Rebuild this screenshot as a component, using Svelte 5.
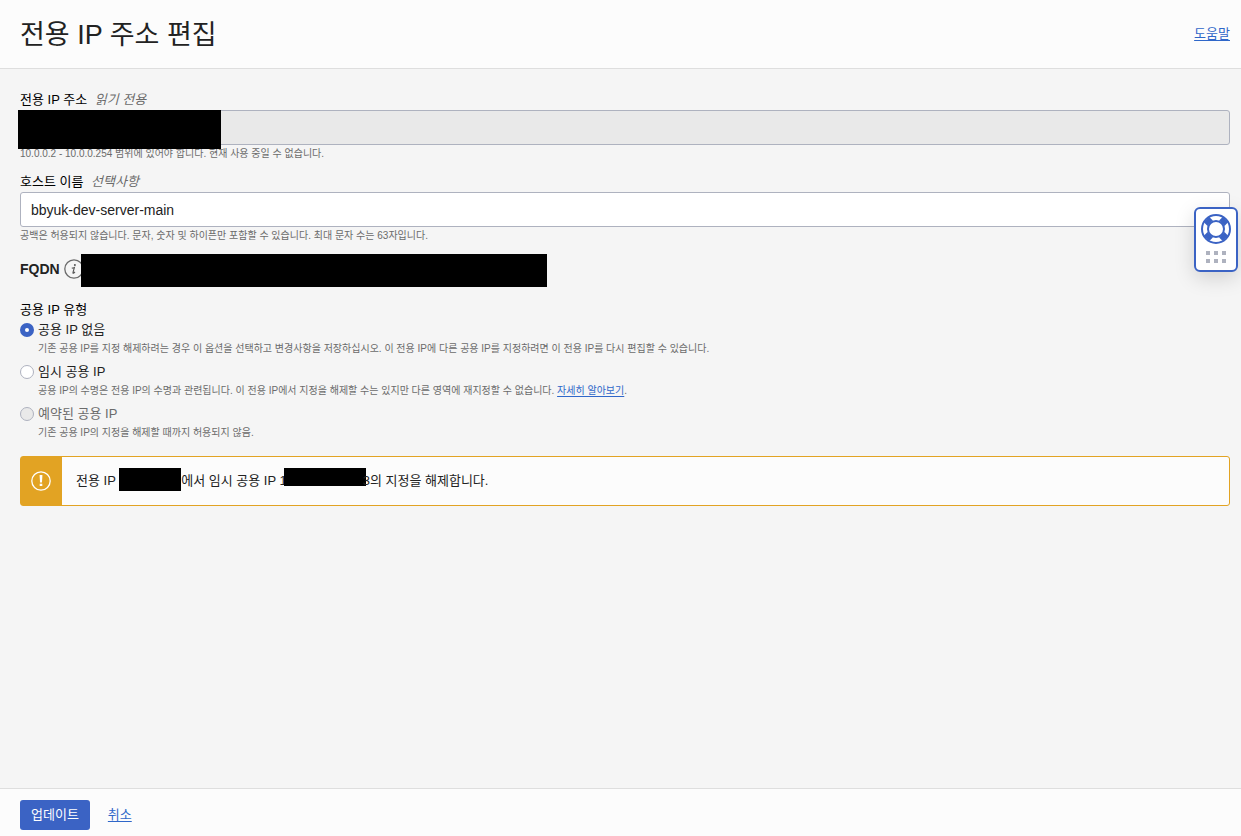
<script>
  let hostname = "bbyuk-dev-server-main";
  let ipType = "none";

  const options = [
    {
      value: "none",
      label: "공용 IP 없음",
      help: "기존 공용 IP를 지정 해제하려는 경우 이 옵션을 선택하고 변경사항을 저장하십시오. 이 전용 IP에 다른 공용 IP를 지정하려면 이 전용 IP를 다시 편집할 수 있습니다.",
    },
    {
      value: "ephemeral",
      label: "임시 공용 IP",
      help: "공용 IP의 수명은 전용 IP의 수명과 관련됩니다. 이 전용 IP에서 지정을 해제할 수는 있지만 다른 영역에 재지정할 수 없습니다.",
      link: "자세히 알아보기",
    },
    {
      value: "reserved",
      label: "예약된 공용 IP",
      help: "기존 공용 IP의 지정을 해제할 때까지 허용되지 않음.",
      disabled: true,
    },
  ];

  const dots = [0, 1, 2, 3, 4, 5];
</script>

<div class="panel">
  <header>
    <h1>전용 IP 주소 편집</h1>
    <a href="#help">도움말</a>
  </header>

  <main>
    <div class="field">
      <label for="private-ip">전용 IP 주소 <em>읽기 전용</em></label>
      <div class="control">
        <input id="private-ip" type="text" readonly />
        <span class="mask mask-ip"></span>
      </div>
      <p class="help">10.0.0.2 - 10.0.0.254 범위에 있어야 합니다. 현재 사용 중일 수 없습니다.</p>
    </div>

    <div class="field">
      <label for="hostname">호스트 이름 <em>선택사항</em></label>
      <input id="hostname" type="text" bind:value={hostname} />
      <p class="help">공백은 허용되지 않습니다. 문자, 숫자 및 하이픈만 포함할 수 있습니다. 최대 문자 수는 63자입니다.</p>
    </div>

    <div class="fqdn">
      <strong>FQDN</strong>
      <button class="info" aria-label="FQDN 정보">
        <svg width="20" height="20" viewBox="0 0 20 20">
          <circle cx="10" cy="10" r="9.2" fill="none" stroke="#6b6b6b" stroke-width="1.3" />
          <circle cx="10.9" cy="5.9" r="1" fill="#555" />
          <path d="M7.8 9.1c.8-.1 1.7-.3 2.6-.7L9 13.5c-.2.9.3 1 .8.5l1.2-1.2" fill="none" stroke="#555" stroke-width="1.1" />
        </svg>
      </button>
      <span class="mask mask-fqdn"></span>
    </div>

    <fieldset>
      <legend>공용 IP 유형</legend>
      {#each options as option}
        <div class="option">
          <label class="choice" class:disabled={option.disabled}>
            <input type="radio" name="ip-type" value={option.value} disabled={option.disabled} bind:group={ipType} />
            {option.label}
          </label>
          <p class="help">
            {option.help}
            {#if option.link}<a href="#learn-more">{option.link}</a>.{/if}
          </p>
        </div>
      {/each}
    </fieldset>

    <div class="alert" role="alert">
      <div class="alert-icon">
        <svg width="20" height="20" viewBox="0 0 20 20">
          <circle cx="10" cy="10" r="9.2" fill="none" stroke="#fff" stroke-width="1.3" />
          <path d="M8.6 4h2.8l-.4 7.6H9z" fill="#fff" />
          <rect x="8.7" y="12.7" width="2.6" height="2.3" fill="#fff" />
        </svg>
      </div>
      <p>전용 IP <span class="redacted wide-short"></span>에서 임시 공용 IP 1<span class="redacted wide-long"></span>3의 지정을 해제합니다.</p>
    </div>
  </main>

  <footer>
    <button class="submit">업데이트</button>
    <a href="#cancel">취소</a>
  </footer>
</div>

<button class="support" aria-label="지원">
  <svg width="30" height="30" viewBox="0 0 30 30" fill="none" stroke="#3b63c4">
    <circle cx="15" cy="15" r="14" stroke-width="2" />
    <circle cx="15" cy="15" r="8" stroke-width="2" />
    <path d="M5.6 5.6l3.6 3.6M24.4 5.6l-3.6 3.6M5.6 24.4l3.6-3.6M24.4 24.4l-3.6-3.6" stroke-width="7.6" />
  </svg>
  <span class="dots">
    {#each dots as dot}<i></i>{/each}
  </span>
</button>

<style>
  :global(body) {
    background: #f5f5f5;
    color: #222;
    font: 14px/20px "Liberation Sans", "Noto Sans CJK KR", sans-serif;
  }

  .panel {
    display: flex;
    flex-direction: column;
    min-height: 100vh;
    font-size: 13px;
  }

  header {
    display: flex;
    align-items: center;
    justify-content: space-between;
    height: 68px;
    padding: 0 11px 0 20px;
    background: #fcfcfc;
    border-bottom: 1px solid #dedede;
  }

  h1 {
    margin: 0;
    padding-top: 2px;
    font-size: 27px;
    line-height: 36px;
    font-weight: 400;
  }

  a {
    color: #2f67c9;
    text-underline-offset: 2px;
  }

  main {
    flex: 1;
    padding: 21px 11px 20px 20px;
  }

  p {
    margin: 0;
  }

  .field {
    margin-bottom: 9px;
  }

  .field label,
  legend {
    display: block;
    padding: 0;
    color: #000;
  }

  em {
    margin-left: 4px;
    color: #6b6b6b;
  }

  .control {
    position: relative;
  }

  input[type="text"] {
    display: block;
    box-sizing: border-box;
    width: 100%;
    height: 35px;
    padding: 0 10px;
    border: 1px solid #aeb2bf;
    border-radius: 3px;
    background: #fff;
    color: #222;
    font: inherit;
    font-size: 14px;
  }

  input[readonly] {
    background: #e9e9e9;
  }

  .mask {
    background: #000;
  }

  .mask-ip {
    position: absolute;
    left: -2px;
    top: 0;
    width: 203px;
    height: 39px;
  }

  .help {
    font-size: 10px;
    line-height: 18px;
    color: #6b6b6b;
  }

  .fqdn {
    position: relative;
    display: flex;
    align-items: center;
    gap: 4px;
    height: 30px;
    margin-bottom: 16px;
  }

  .fqdn strong {
    font-size: 14px;
  }

  .info {
    display: flex;
    padding: 0;
    border: 0;
    background: none;
  }

  .mask-fqdn {
    position: absolute;
    left: 61px;
    top: 0;
    width: 466px;
    height: 33px;
  }

  fieldset {
    margin: 0 0 14px;
    padding: 0;
    border: 0;
  }

  .option + .option {
    margin-top: 4px;
  }

  .choice {
    display: flex;
    align-items: center;
    gap: 4px;
  }

  .choice.disabled {
    color: #6b6b6b;
  }

  input[type="radio"] {
    appearance: none;
    box-sizing: border-box;
    width: 14px;
    height: 14px;
    margin: 0;
    border: 1px solid #aeb2bf;
    border-radius: 50%;
    background: #fff;
  }

  input[type="radio"]:checked {
    border: 5px solid #3b63c4;
  }

  input[type="radio"]:disabled {
    background: #e9e9e9;
  }

  .option .help {
    padding-left: 18px;
  }

  .alert {
    display: flex;
    box-sizing: border-box;
    height: 50px;
    border: 1px solid #e2a323;
    border-radius: 3px;
    background: #fcfcfc;
  }

  .alert-icon {
    display: flex;
    align-items: center;
    justify-content: center;
    width: 40px;
    padding-right: 1px;
    background: #e2a323;
  }

  .alert p {
    align-self: center;
    padding-left: 14px;
  }

  .redacted {
    display: inline-block;
    vertical-align: top;
    background: #000;
  }

  .wide-short {
    width: 62px;
    height: 23px;
    margin: -3px 0 0;
  }

  .wide-long {
    width: 82px;
    height: 18px;
    margin: -3px -3px 0;
  }

  footer {
    display: flex;
    align-items: center;
    gap: 18px;
    padding: 11px 20px 6px;
    border-top: 1px solid #dedede;
    background: #fcfcfc;
  }

  .submit {
    height: 30px;
    padding: 0 11px;
    border: 0;
    border-radius: 3px;
    background: #3b63c4;
    color: #fff;
    font: inherit;
  }

  .support {
    position: fixed;
    top: 207px;
    right: 3px;
    display: flex;
    flex-direction: column;
    align-items: center;
    gap: 7px;
    box-sizing: border-box;
    width: 44px;
    height: 65px;
    padding: 5px 0;
    border: 2px solid #3b63c4;
    border-radius: 6px;
    background: #fff;
    box-shadow: 0 6px 20px rgba(0, 0, 0, 0.15);
  }

  .dots {
    display: grid;
    grid-template-columns: repeat(3, 4px);
    gap: 4px;
  }

  .dots i {
    width: 4px;
    height: 4px;
    background: #aeb2bf;
  }
</style>
